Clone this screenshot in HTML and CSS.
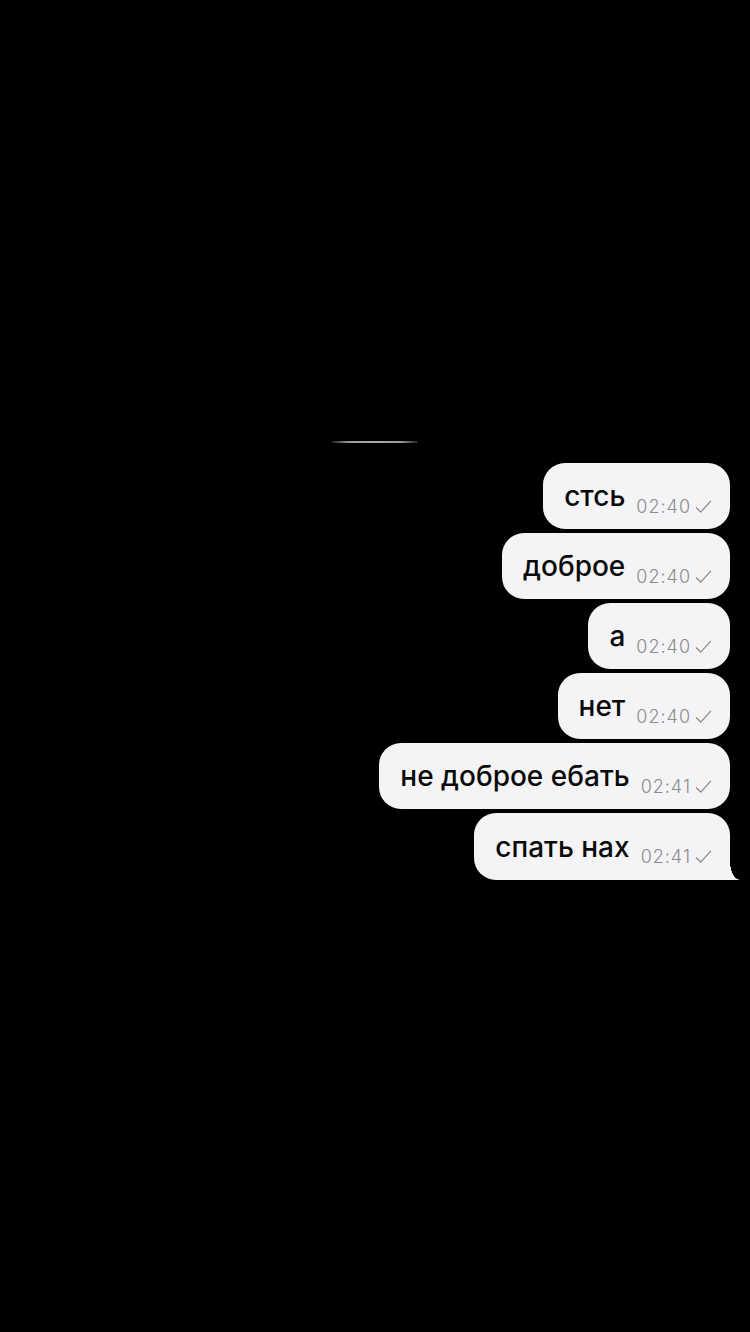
FILE: index.html
```html
<!DOCTYPE html>
<html lang="ru">
<head>
    <meta charset="UTF-8">
    <meta name="viewport" content="width=device-width, initial-scale=1.0">
    <title>чат</title>
    <link rel="stylesheet" href="styles.css">
</head>
<body>
    <div class="screen">
        <div class="divider"></div>
        <div id="messages">
            <div class="msg"><span class="text">стсь</span><span class="time">02:40</span><svg class="tick" viewBox="0 0 18 14"><path d="M1 8 L6 13 L17 1"/></svg></div>
            <div class="msg"><span class="text">доброе</span><span class="time">02:40</span><svg class="tick" viewBox="0 0 18 14"><path d="M1 8 L6 13 L17 1"/></svg></div>
            <div class="msg"><span class="text">а</span><span class="time">02:40</span><svg class="tick" viewBox="0 0 18 14"><path d="M1 8 L6 13 L17 1"/></svg></div>
            <div class="msg"><span class="text">нет</span><span class="time">02:40</span><svg class="tick" viewBox="0 0 18 14"><path d="M1 8 L6 13 L17 1"/></svg></div>
            <div class="msg"><span class="text">не доброе ебать</span><span class="time">02:41</span><svg class="tick" viewBox="0 0 18 14"><path d="M1 8 L6 13 L17 1"/></svg></div>
            <div class="msg last"><span class="text">спать нах</span><span class="time">02:41</span><svg class="tick" viewBox="0 0 18 14"><path d="M1 8 L6 13 L17 1"/></svg></div>
        </div>
    </div>
</body>
</html>
```
FILE: styles.css
```css
body {
    margin: 0;
    background: #000;
    font-family: "Inter", "Liberation Sans", sans-serif;
}

.screen {
    width: 750px;
    height: 1332px;
    overflow: hidden;
}

.divider {
    width: 86px;
    height: 2px;
    margin: 441px 0 0 332px;
    background: linear-gradient(to right, #222, #9a9a9a 20%, #aaa 50%, #9a9a9a 80%, #222);
}

#messages {
    display: flex;
    flex-direction: column;
    align-items: flex-end;
    gap: 4px;
    padding-right: 20px;
    margin-top: 20px;
}

.msg {
    position: relative;
    display: flex;
    align-items: center;
    height: 66px;
    box-sizing: border-box;
    padding: 0 18px 0 21px;
    background: #f4f4f6;
    border-radius: 22px;
}

.msg.last {
    height: 67px;
    border-bottom-right-radius: 4px;
}

.msg.last::after {
    content: "";
    position: absolute;
    right: -10px;
    bottom: 0;
    width: 14px;
    height: 18px;
    background: radial-gradient(10px 18px at 100% 0, transparent 97%, #f4f4f6 100%);
}

.text {
    font-size: 28px;
    font-weight: 500;
    color: #0a0a0a;
}

.time {
    font-size: 18px;
    font-weight: 300;
    color: #8c8c8c;
    margin-left: 11px;
    margin-top: 20px;
    letter-spacing: 1px;
}

.tick {
    width: 17px;
    height: 13px;
    margin-left: 4px;
    margin-top: 20px;
    fill: none;
    stroke: #8c8c8c;
    stroke-width: 1.4;
}
```
